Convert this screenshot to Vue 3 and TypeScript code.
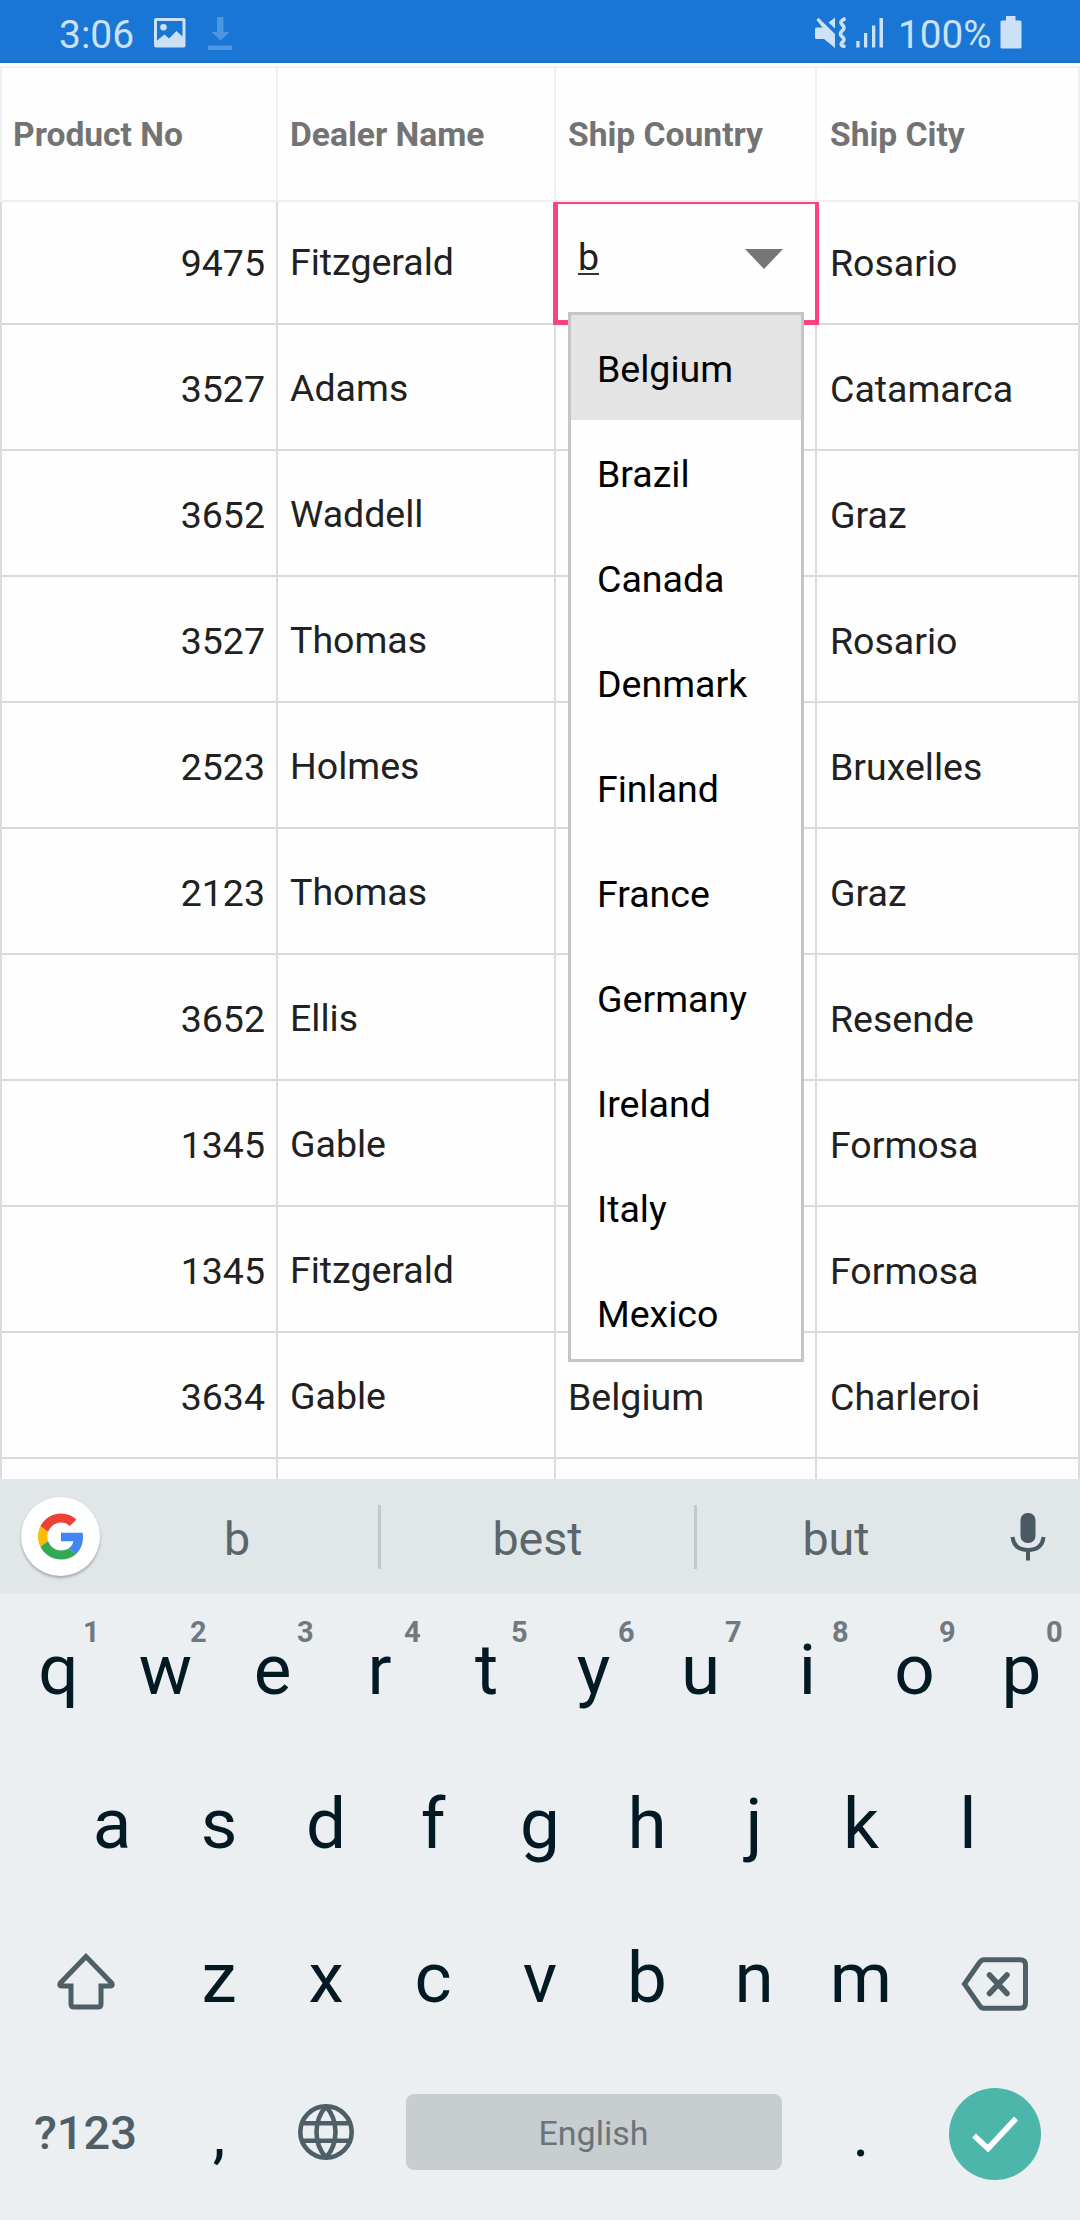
<script setup lang="ts">
interface Order {
  no: string
  dealer: string
  country: string
  city: string
}

const orders: Order[] = [
  { no: '9475', dealer: 'Fitzgerald', country: '', city: 'Rosario' },
  { no: '3527', dealer: 'Adams', country: '', city: 'Catamarca' },
  { no: '3652', dealer: 'Waddell', country: '', city: 'Graz' },
  { no: '3527', dealer: 'Thomas', country: '', city: 'Rosario' },
  { no: '2523', dealer: 'Holmes', country: '', city: 'Bruxelles' },
  { no: '2123', dealer: 'Thomas', country: '', city: 'Graz' },
  { no: '3652', dealer: 'Ellis', country: '', city: 'Resende' },
  { no: '1345', dealer: 'Gable', country: '', city: 'Formosa' },
  { no: '1345', dealer: 'Fitzgerald', country: '', city: 'Formosa' },
  { no: '3634', dealer: 'Gable', country: 'Belgium', city: 'Charleroi' },
  { no: '', dealer: '', country: '', city: '' },
]

const countries: string[] = [
  'Belgium', 'Brazil', 'Canada', 'Denmark', 'Finland',
  'France', 'Germany', 'Ireland', 'Italy', 'Mexico',
]

const topKeys = 'qwertyuiop'.split('').map((letter, i) => ({ letter, hint: String((i + 1) % 10) }))
const homeKeys: string[] = 'asdfghjkl'.split('')
const bottomKeys: string[] = 'zxcvbnm'.split('')
</script>

<template>
  <div class="screen">
    <header class="status">
      <span class="clock">3:06</span>
      <svg class="pic" width="32" height="30" viewBox="0 0 32 30">
        <path fill="#cbe1f6" fill-rule="evenodd" d="M2 0H30Q31.500 0 31.500 2V27Q31.500 29.500 30 29.500H2Q0 29.500 0 27V2Q0 0 2 0ZM3 3V22.500L10.500 16.500L15 20.500L22.500 13L28.500 18.500V3ZM9.500 6a3.300 3.300 0 1 1 0 6.600a3.300 3.300 0 0 1 0-6.600Z" />
      </svg>
      <svg class="down" width="24" height="33" viewBox="0 0 24 33">
        <path fill="#4f96e0" d="M9 0H15.500V15H21.500L12.500 23.500L3.500 15H9ZM0 28.500H24V33H0Z" />
      </svg>
      <span class="grow"></span>
      <svg class="mute" width="32" height="33" viewBox="0 0 32 33">
        <path fill="#cbe1f6" d="M0 12Q0 10.500 1.500 10.500H7.500L1.500 3L3.500 0.800L20 17V31L9 22H1.500Q0 22 0 20.500ZM20 0.500V11.500L13.500 5.500Z" />
        <path d="M30.500 1.500Q24 4 27 7.500Q31 10.500 27 14Q24 17 27 19.500Q31 22.500 27 25.500Q24.500 29 30.500 29.500" fill="none" stroke="#cbe1f6" stroke-width="3.600" />
      </svg>
      <svg class="signal" width="28" height="31" viewBox="0 0 28 31">
        <path fill="#cbe1f6" d="M0.300 24h3.300v6.500h-3.300zM8 16h3.300v14.500h-3.300zM16 8.500h3.300v22h-3.300zM23.500 1h3.500v29.500h-3.500z" />
      </svg>
      <span class="percent">100%</span>
      <svg class="battery" width="22" height="33" viewBox="0 0 22 33">
        <path fill="#cbe1f6" d="M6 0h9.500v4.500H20q1.500 0 1.500 1.500V31q0 1.500-1.500 1.500H2Q.5 32.500.5 31V6Q.5 4.500 2 4.500h4z" />
      </svg>
    </header>

    <main class="grid">
      <div class="row head">
        <div class="cell">Product No</div>
        <div class="cell">Dealer Name</div>
        <div class="cell">Ship Country</div>
        <div class="cell">Ship City</div>
      </div>
      <div v-for="(o, i) in orders" :key="i" class="row" :class="{ first: i === 0 }">
        <div class="cell num">{{ o.no }}</div>
        <div class="cell dealer">{{ o.dealer }}</div>
        <div class="cell">
          {{ o.country }}
          <div v-if="i === 0" class="editor">
            <span class="typed">b</span>
            <svg width="38" height="20" viewBox="0 0 38 20"><path fill="#757575" d="M0 0H38L19 20Z" /></svg>
          </div>
          <ul v-if="i === 0" class="menu">
            <li v-for="(c, n) in countries" :key="c" :class="{ active: n === 0 }">{{ c }}</li>
          </ul>
        </div>
        <div class="cell">{{ o.city }}</div>
      </div>
    </main>

    <section class="keyboard">
      <div class="strip">
        <div class="gbox">
          <div class="google">
            <svg width="46" height="47" viewBox="0 0 48 48">
              <path fill="#EA4335" d="M24 9.500c3.540 0 6.710 1.220 9.210 3.600l6.850-6.850C35.900 2.380 30.470 0 24 0 14.620 0 6.510 5.380 2.560 13.220l7.980 6.190C12.430 13.720 17.740 9.500 24 9.500z" />
              <path fill="#4285F4" d="M46.980 24.550c0-1.570-.15-3.090-.38-4.550H24v9.020h12.940c-.58 2.960-2.260 5.480-4.780 7.180l7.730 6c4.510-4.180 7.090-10.360 7.090-17.650z" />
              <path fill="#FBBC05" d="M10.530 28.590c-.48-1.450-.76-2.990-.76-4.590s.27-3.140.76-4.590l-7.980-6.190C.92 16.460 0 20.120 0 24c0 3.880.92 7.540 2.560 10.780l7.970-6.190z" />
              <path fill="#34A853" d="M24 48c6.480 0 11.930-2.130 15.890-5.810l-7.730-6c-2.150 1.450-4.920 2.300-8.160 2.300-6.260 0-11.570-4.220-13.470-9.910l-7.980 6.190C6.510 42.620 14.620 48 24 48z" />
            </svg>
          </div>
        </div>
        <div class="word w1">b</div>
        <i class="bar"></i>
        <div class="word w2">best</div>
        <i class="bar"></i>
        <div class="word w3">but</div>
        <div class="mic">
          <svg width="36" height="48" viewBox="0 0 36 48">
            <rect x="10.500" y="0" width="15" height="30" rx="7" fill="#4a5a62" />
            <path d="M2.500 24C3.500 33 9.500 37 18 37S32.500 33 33.500 24M18 37V47.500" fill="none" stroke="#4a5a62" stroke-width="4" />
          </svg>
        </div>
      </div>

      <div class="keys">
        <div class="krow">
          <div v-for="k in topKeys" :key="k.letter" class="key">
            {{ k.letter }}<sup class="hint">{{ k.hint }}</sup>
          </div>
        </div>
        <div class="krow">
          <div v-for="k in homeKeys" :key="k" class="key">{{ k }}</div>
        </div>
        <div class="krow">
          <div class="key wide">
            <svg class="shift" width="60" height="58" viewBox="0 0 60 58">
              <path d="M30 4.500L4 31.500Q3 34 6 34H15V52Q15 55 18 55H42Q45 55 45 52V34H54Q57 34 56 31.500Z" fill="none" stroke="#4e5f67" stroke-width="5" />
            </svg>
          </div>
          <div v-for="k in bottomKeys" :key="k" class="key">{{ k }}</div>
          <div class="key wide">
            <svg class="back" width="68" height="54" viewBox="0 0 68 54">
              <path d="M23 2.700H59Q64.500 2.700 64.500 8V46Q64.500 51.300 59 51.300H23Q20.500 51.300 18.500 48.500L3.500 27L18.500 5.500Q20.500 2.700 23 2.700Z" fill="none" stroke="#4e5f67" stroke-width="5" />
              <path d="M28.500 18L46 36.500M46 18L28.500 36.500" stroke="#4e5f67" stroke-width="5.500" stroke-linecap="round" />
            </svg>
          </div>
        </div>
        <div class="krow">
          <div class="key wide sym">?123</div>
          <div class="key punct">,</div>
          <div class="key globe">
            <svg width="56" height="56" viewBox="0 0 56 56">
              <g fill="none" stroke="#4e5f67" stroke-width="4.600">
                <circle cx="28" cy="28" r="25.700" />
                <path d="M4 19.300H52M4 36.700H52" />
                <path d="M28 2.500Q18.500 13 18.500 28T28 53.500Q37.500 43 37.500 28T28 2.500Z" />
              </g>
            </svg>
          </div>
          <div class="space">English</div>
          <div class="key punct">.</div>
          <div class="key wide">
            <div class="done">
              <svg width="48" height="38" viewBox="0 0 48 38">
                <path d="M3 20.500L17 33.500L45 3.500" fill="none" stroke="#fff" stroke-width="5.500" />
              </svg>
            </div>
          </div>
        </div>
      </div>
    </section>
  </div>
</template>

<style>
body {
  margin: 0;
  background: #fff;
}
</style>

<style scoped>
* {
  box-sizing: border-box;
}
.screen {
  width: 1080px;
  height: 2220px;
  display: flex;
  flex-direction: column;
  overflow: hidden;
  background: #fefefe;
  font-family: Roboto, "Liberation Sans", sans-serif;
}
.screen svg {
  display: block;
  flex: none;
}

.status {
  flex: none;
  height: 63px;
  display: flex;
  align-items: flex-start;
  padding: 0 58px 0 59px;
  background: #1a76d5;
  color: #cbe1f6;
  border-bottom: 2px solid #1b6fc4;
  font-size: 39px;
  line-height: 46px;
}
.clock {
  width: 95px;
  padding-top: 12px;
}
.pic {
  margin-top: 18px;
}
.down {
  margin: 17px 0 0 22px;
}
.grow {
  flex: 1;
}
.mute {
  margin: 17px 9px 0 0;
}
.signal {
  margin-top: 17px;
}
.percent {
  width: 102px;
  margin-left: 14px;
  padding-top: 12px;
  font-size: 38.700px;
}
.battery {
  margin-top: 16px;
}

.grid {
  flex: none;
  height: 1416px;
  padding-top: 3px;
  overflow: hidden;
}
.row {
  display: grid;
  grid-template-columns: 278px 278px 261px 263px;
  height: 126px;
}
.row.first {
  height: 123px;
}
.cell {
  position: relative;
  display: flex;
  align-items: flex-end;
  padding: 0 12px 38px;
  border-right: 2px solid #dcdcdc;
  border-bottom: 2px solid #dadada;
  color: #212121;
  font-size: 37.500px;
  line-height: 44px;
  white-space: nowrap;
}
.cell:first-child {
  border-left: 2px solid #dcdcdc;
}
.cell:last-child {
  padding-left: 13px;
}
.cell.num {
  justify-content: flex-end;
  padding-right: 11px;
}
.cell.dealer {
  padding-bottom: 39px;
}
.row.head {
  height: 136px;
  border-top: 2px solid #f1f1f1;
}
.head .cell {
  border-color: #efefef;
  padding-bottom: 43px;
  color: #737373;
  font-size: 33.600px;
  font-weight: 700;
}
.head .cell:first-child {
  padding-left: 11px;
}

.editor {
  position: absolute;
  z-index: 1;
  left: -3px;
  top: 0;
  width: 266px;
  height: 123px;
  display: flex;
  align-items: flex-start;
  justify-content: space-between;
  padding: 32px 32px 0 20px;
  border: 5px solid #fa4481;
  border-top-width: 2px;
  border-right-width: 4px;
  background: #fefefe;
}
.typed {
  height: 39px;
  border-bottom: 2px solid #333;
  line-height: 42px;
}
.editor svg {
  margin-top: 13px;
}
.menu {
  position: absolute;
  z-index: 2;
  left: 12px;
  top: 110px;
  width: 236px;
  height: 1050px;
  margin: 0;
  padding: 0;
  list-style: none;
  overflow: hidden;
  border: 3px solid #c5c5c5;
  background: #fefefe;
  color: #000;
}
.menu li {
  height: 105px;
  padding: 3px 0 0 26px;
  line-height: 102px;
}
.menu .active {
  background: #e4e4e4;
}

.keyboard {
  flex: 1;
  background: #ebeff2;
}
.strip {
  display: flex;
  align-items: center;
  height: 115px;
  background: #e1e6e9;
  color: #5a666c;
  font-size: 46.600px;
}
.gbox {
  width: 96px;
  flex: none;
}
.google {
  display: flex;
  align-items: center;
  justify-content: center;
  width: 79px;
  height: 79px;
  margin-left: 21px;
  border-radius: 50%;
  background: #fff;
  box-shadow: 0 2px 3px rgba(0, 0, 0, 0.28);
}
.word {
  text-align: center;
  padding-top: 4px;
}
.w1 {
  width: 282px;
}
.w2 {
  width: 313px;
}
.w3 {
  width: 278px;
}
.bar {
  width: 3px;
  height: 64px;
  background: #c2c8cb;
}
.mic {
  margin-left: 35px;
}

.keys {
  display: grid;
  grid-template-rows: 152px 155px 154px 155px;
}
.krow {
  display: flex;
  justify-content: center;
}
.key {
  position: relative;
  width: 107px;
  display: flex;
  align-items: center;
  justify-content: center;
  color: #021a24;
  font-size: 71px;
  line-height: 84px;
}
.key.wide {
  width: 160px;
}
.hint {
  position: absolute;
  top: 21px;
  left: 78px;
  color: #71797e;
  font-size: 29px;
  font-weight: 700;
  line-height: 34px;
}
.wide .shift {
  margin-top: 6px;
}
.wide .back {
  margin-top: 12px;
}
.wide.sym {
  color: #4e5f67;
  font-size: 47px;
  font-weight: 500;
}
.key.globe {
  padding-bottom: 2px;
}
.key.punct {
  font-size: 64px;
  padding-top: 4px;
}
.space {
  align-self: center;
  width: 376px;
  height: 76px;
  margin: 0 26px 2px;
  border-radius: 8px;
  background: #c8cdd0;
  color: #6b7479;
  font-size: 34px;
  line-height: 78px;
  text-align: center;
}
.done {
  display: flex;
  align-items: center;
  justify-content: center;
  width: 92px;
  height: 92px;
  margin-top: 3px;
  border-radius: 50%;
  background: #4db6ab;
}
</style>
